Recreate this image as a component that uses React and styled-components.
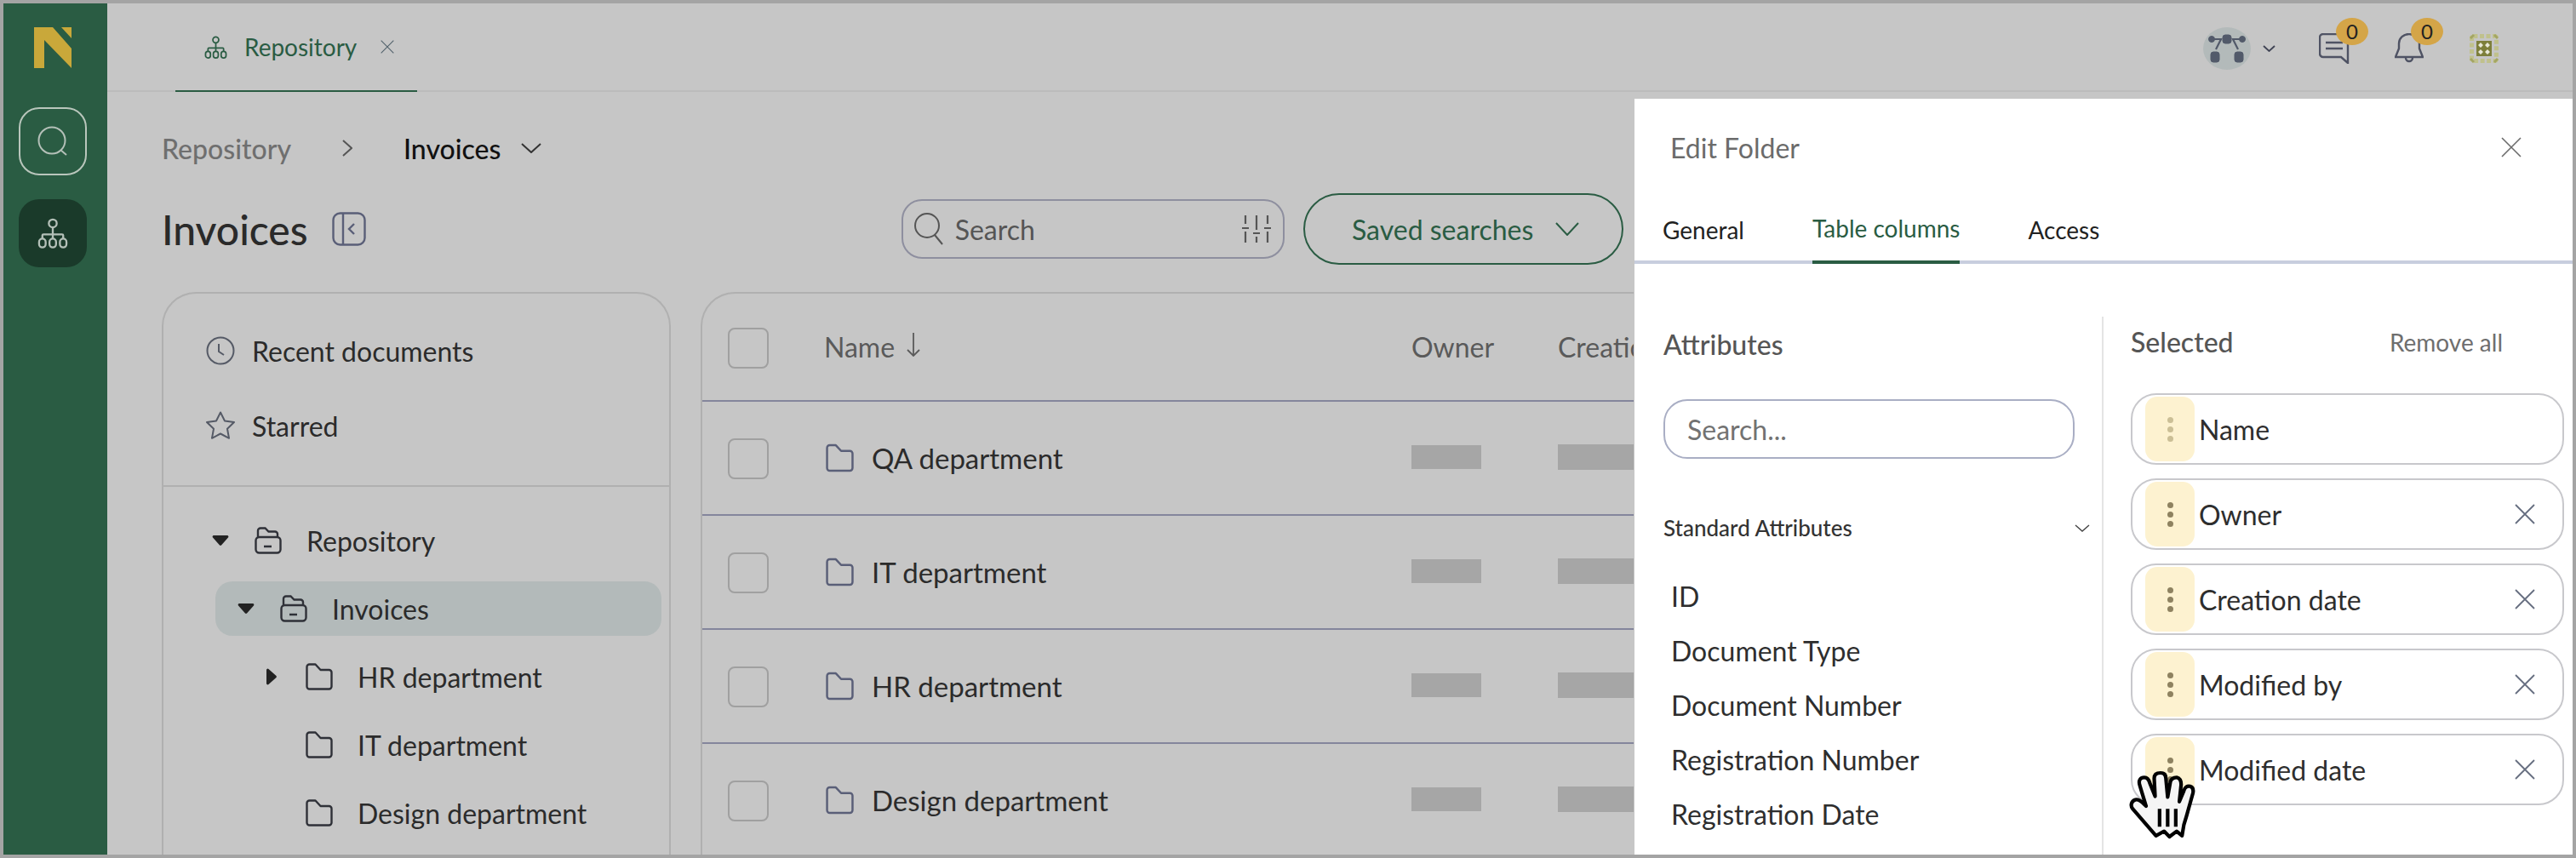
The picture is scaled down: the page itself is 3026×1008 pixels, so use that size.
import React from 'react';
import styled, { createGlobalStyle } from 'styled-components';

const Global = createGlobalStyle`
  html, body { margin: 0; padding: 0; background: #c6c6c6; }
  body { font-family: Lato, "Noto Sans", sans-serif; }
  * { box-sizing: border-box; }
`;

const Frame = styled.div`
  position: relative; width: 3026px; height: 1008px; overflow: hidden;
  border: 4px solid #a4a4a4; display: flex; background: #c6c6c6; color: #2b2b2b;
`;
const Rail = styled.nav`
  width: 122px; flex: none; background: #2a5c43; display: flex; flex-direction: column;
  align-items: center; padding: 28px 6px 0 0;
`;
const Logo = styled.svg` width: 44px; height: 48px; margin-bottom: 46px; `;
const RailButton = styled.button`
  width: 80px; height: 80px; border-radius: 24px; padding: 0; display: flex; align-items: center; justify-content: center;
  background: ${p => p.$active ? '#1a3a2a' : 'transparent'};
  border: ${p => p.$active ? 'none' : '2px solid #b9c6bc'};
  margin-bottom: 28px; color: #b4c0b8;
`;
const Main = styled.main` flex: 1; min-width: 0; display: flex; flex-direction: column; `;
const TopBar = styled.header`
  height: 104px; flex: none; border-bottom: 2px solid #bcbcbc; display: flex; justify-content: space-between; align-items: stretch;
`;
const Tab = styled.div`
  margin-left: 80px; width: 284px; height: 104px; border-bottom: 2px solid #2a5c43; display: flex; align-items: center;
  padding: 0 0 0 34px; color: #2a5c43; font-size: 28px; gap: 20px;
`;
const TabClose = styled.span` margin-left: 8px; display: flex; color: #555; `;
const TopIcons = styled.div` display: flex; align-items: center; padding-right: 87px; padding-top: 4px; `;
const Avatar = styled.div`
  width: 56px; height: 50px; border-radius: 50%; background: #b3baba; display: flex; align-items: center; justify-content: center;
`;
const SmallChevron = styled.span` display: flex; color: #3f4354; margin: 0 51px 0 14px; `;
const IconBadge = styled.div` position: relative; display: flex; margin-right: ${p => p.$mr}px; `;
const Badge = styled.span`
  position: absolute; left: ${p => p.$left}px; top: -18px; width: 38px; height: 32px; border-radius: 50%;
  background: #d4a548; color: #222; font-size: 24px; line-height: 32px; text-align: center;
`;
const Content = styled.div` flex: 1; min-height: 0; padding: 0 0 0 64px; display: flex; flex-direction: column; `;
const Crumbs = styled.div` height: 128px; flex: none; display: flex; align-items: center; font-size: 32px; padding-top: 4px; `;
const CrumbLink = styled.span` color: #6f6f6f; font-weight: 500; `;
const CrumbCurrent = styled.span` color: #111; margin-right: 24px; font-weight: 500; `;
const CrumbSep = styled.span` display: flex; color: #555; margin: 0 60px 0 60px; `;
const TitleRow = styled.div` height: 66px; flex: none; display: flex; align-items: center; position: relative; `;
const Title = styled.h1` font-size: 48px; font-weight: 500; margin: 0 28px 0 0; color: #2a2a2a; `;
const SearchPill = styled.div`
  width: 450px; height: 70px; border: 2px solid #8e8f9f; border-radius: 24px; display: flex; align-items: center;
  margin-left: 629px; padding: 0 14px 0 13px; font-size: 32px; color: #555; gap: 14px;
`;
const Grow = styled.span` flex: 1; `;
const SavedButton = styled.div`
  width: 376px; height: 84px; border: 2px solid #2a5c43; border-radius: 42px; margin-left: 22px; color: #2a5c43;
  display: flex; align-items: center; justify-content: center; gap: 26px; font-size: 32px; padding-left: 6px;
`;
const Columns = styled.div` flex: 1; min-height: 0; margin-top: 41px; display: flex; gap: 35px; `;
const NavCard = styled.aside`
  width: 598px; flex: none; border: 2px solid #b0b0b0; border-bottom: none; border-radius: 40px 40px 0 0;
`;
const Quick = styled.div` padding: 24px 0 25px 50px; border-bottom: 2px solid #b0b0b0; `;
const QuickRow = styled.div` height: 88px; display: flex; align-items: center; gap: 20px; font-size: 32px; color: #2b2b2b; padding-bottom: 2px; `;
const Tree = styled.div` padding: 31px 9px 0 50px; display: flex; flex-direction: column; gap: 16px; `;
const TreeRow = styled.div`
  height: 64px; display: flex; align-items: center; font-size: 32px; color: #2b2b2b;
  margin-left: ${p => p.$selected ? 11 : 0}px; padding-left: ${p => p.$indent}px; border-radius: 20px;
  background: ${p => p.$selected ? '#b3baba' : 'transparent'};
`;
const CaretSlot = styled.span` width: 20px; height: 20px; display: flex; align-items: center; justify-content: center; margin-right: 30px; flex: none; `;
const TreeLabel = styled.span` margin-left: 29px; `;
const TableCard = styled.section`
  width: 1096px; flex: none; overflow: hidden; border: 2px solid #b0b0b0; border-right: none; border-bottom: none; border-radius: 40px 0 0 0;
`;
const HeadRow = styled.div`
  height: 127px; display: grid; grid-template-columns: 143px 690px 172px minmax(0, 1fr); align-items: center; border-bottom: 2px solid #84869c;
  font-size: 32px; color: #5a5a5a;
`;
const BodyRow = styled.div`
  height: 134px; display: grid; grid-template-columns: 143px 690px 172px minmax(0, 1fr); align-items: center; border-bottom: 2px solid #84869c;
  font-size: 33px; color: #2b2b2b;
`;
const ClippedHead = styled.span` display: block; white-space: nowrap; overflow: hidden; `;
const Check = styled.span` display: block; width: 48px; height: 48px; border: 2px solid #a0a0a0; border-radius: 8px; margin: 2px 0 0 30px; `;
const Sortable = styled.span` display: flex; align-items: center; gap: 14px; `;
const SortArrow = styled.svg` width: 16px; height: 28px; margin-bottom: 6px; `;
const NameCell = styled.span` display: flex; align-items: center; gap: 21px; margin-left: 2px; `;
const Placeholder = styled.span` display: block; height: ${p => p.$h}px; background: #a6a6a6; width: ${p => p.$w}px; margin-bottom: 2px; `;
const Panel = styled.aside`
  position: absolute; left: 1916px; top: 112px; right: 0; bottom: 0; background: #fff; display: flex; flex-direction: column;
`;
const PanelHead = styled.div`
  height: 114px; flex: none; display: flex; align-items: center; justify-content: space-between; padding: 0 60px 0 42px;
  font-size: 32px; color: #6b6b6b;
`;
const PanelTabs = styled.div` height: 80px; flex: none; border-bottom: 4px solid #c8cede; display: flex; padding-left: 33px; gap: 80px; font-size: 28px; color: #222; `;
const PanelTab = styled.span`
  height: 80px; display: flex; align-items: center;
  ${p => p.$active ? 'color: #2a5c43; border-bottom: 4px solid #2a5c43;' : ''}
`;
const PanelBody = styled.div` flex: 1; min-height: 0; display: flex; padding-top: 62px; `;
const AttrCol = styled.div` width: 551px; flex: none; border-right: 2px solid #e4e4e4; padding: 0 14px 0 34px; `;
const ColTitle = styled.div` font-size: 32px; font-weight: 500; color: #555; line-height: 40px; `;
const AttrTitle = styled(ColTitle)` margin-top: 13px; `;
const AttrSearch = styled.div`
  width: 483px; height: 70px; margin-top: 44px; border: 2px solid #a9aec4; border-radius: 28px; padding-left: 26px;
  display: flex; align-items: center; font-size: 32px; color: #727272;
`;
const Group = styled.div` margin-top: 64px; height: 34px; display: flex; align-items: center; justify-content: space-between; font-size: 26px; font-weight: 500; color: #333; `;
const AttrList = styled.ul` list-style: none; margin: 31px 0 0; padding: 0 0 0 9px; `;
const AttrItem = styled.li` height: 64px; display: flex; align-items: center; font-size: 32px; color: #2e2e2e; `;
const SelCol = styled.div` flex: 1; padding: 0 10px 0 32px; `;
const SelHead = styled.div` display: flex; align-items: center; justify-content: space-between; padding-right: 72px; margin-top: 10px; height: 40px; `;
const RemoveAll = styled.span` font-size: 28px; color: #6e6e6e; `;
const ChipList = styled.div` display: flex; flex-direction: column; gap: 16px; margin-top: 40px; `;
const Chip = styled.div`
  height: 84px; border: 2px solid #c8c8cc; border-radius: 30px; display: flex; align-items: center; font-size: 32px; color: #2e2e2e; padding: 0 32px 0 15px;
`;
const Handle = styled.span`
  width: 58px; height: 76px; background: #fdf2d0; border-radius: 14px; display: flex; flex-direction: column; align-items: center; justify-content: center; gap: 4px; margin-right: 5px; flex: none;
`;
const Dot = styled.i` width: 7px; height: 7px; border-radius: 50%; background: ${p => p.$dim ? '#cbbf96' : '#8e8260'}; display: block; `;
const ChipLabel = styled.span` flex: 1; `;
const HandCursor = styled.svg` position: absolute; left: 2498px; top: 904px; width: 76px; height: 76px; overflow: visible; `;

const OrgIcon = ({ size = 28, color = 'currentColor' }) => (
  <svg width={size} height={size} viewBox="0 0 28 28" fill="none" stroke={color} strokeWidth="1.8">
    <circle cx="14" cy="5" r="3.6" /><path d="M14 9v6M4.5 19v-3a1 1 0 0 1 1-1h17a1 1 0 0 1 1 1v3M14 15v4" />
    <rect x="1.5" y="19" width="6" height="8" rx="3" /><rect x="11" y="19" width="6" height="8" rx="3" /><rect x="20.5" y="19" width="6" height="8" rx="3" />
  </svg>
);
const XIcon = ({ size = 24, color = '#666e80', w = 1.8 }) => (
  <svg width={size} height={size} viewBox="0 0 24 24" fill="none" stroke={color} strokeWidth={w}><path d="M1 1l22 22M23 1L1 23" /></svg>
);
const Chevron = ({ w = 24, h = 12, color = 'currentColor', sw = 2 }) => (
  <svg width={w} height={h} viewBox={`0 0 ${w} ${h}`} fill="none" stroke={color} strokeWidth={sw}><path d={`M1 1L${w / 2} ${h - 1}L${w - 1} 1`} /></svg>
);
const Folder = ({ color = '#2f3138', w = 32, h = 32 }) => (
  <svg width={w} height={h} viewBox="0 0 32 32" fill="none" stroke={color} strokeWidth="2.4">
    <path d="M1.5 4.5a3 3 0 0 1 3-3h7l6 6.5h10a3 3 0 0 1 3 3v16.5a3 3 0 0 1-3 3h-23a3 3 0 0 1-3-3z" strokeLinejoin="round" />
  </svg>
);
const OpenFolder = () => (
  <svg width="32" height="32" viewBox="0 0 32 32" fill="none" stroke="#2f3138" strokeWidth="2.4">
    <rect x="1.5" y="12" width="29" height="18.5" rx="4" /><path d="M11 23h9M4 12V4.5a3 3 0 0 1 3-3h5.5l4 4H24a3 3 0 0 1 3 3V12" />
  </svg>
);
const CaretDown = () => <svg width="20" height="14" viewBox="0 0 20 14"><path d="M2 1h16a1.5 1.5 0 0 1 1 2.5l-8 9a1.5 1.5 0 0 1-2 0l-8-9A1.5 1.5 0 0 1 2 1z" fill="#222" /></svg>;
const CaretRight = () => <svg width="14" height="20" viewBox="0 0 14 20"><path d="M1 2v16a1.5 1.5 0 0 0 2.5 1l9-8a1.5 1.5 0 0 0 0-2l-9-8A1.5 1.5 0 0 0 1 2z" fill="#222" /></svg>;

const depts = ['QA department', 'IT department', 'HR department', 'Design department'];
const chips = ['Name', 'Owner', 'Creation date', 'Modified by', 'Modified date'];
const attrs = ['ID', 'Document Type', 'Document Number', 'Registration Number', 'Registration Date'];

export default function App() {
  return (
    <Frame>
      <Global />
      <Rail>
        <Logo viewBox="0 0 44 48"><path d="M0 0h22l22 25v23L12 15v33H0zM32 0h12v13z" fill="#c9a83a" /></Logo>
        <RailButton>
          <svg width="36" height="36" viewBox="0 0 36 36" fill="none" stroke="currentColor" strokeWidth="2"><circle cx="17" cy="17" r="15.5" /><path d="M27 28l7 6" /></svg>
        </RailButton>
        <RailButton $active><OrgIcon size={36} /></RailButton>
      </Rail>
      <Main>
        <TopBar>
          <Tab><OrgIcon size={27} /><span>Repository</span><TabClose><XIcon size={16} color="#50606a" w={1.6} /></TabClose></Tab>
          <TopIcons>
            <Avatar>
              <svg width="44" height="34" viewBox="0 0 44 34" fill="#525a6a" stroke="#525a6a">
                <circle cx="4" cy="6" r="3.5" /><circle cx="40" cy="6" r="3.5" /><rect x="17" y="1" width="10" height="10" rx="3" />
                <rect x="3" y="21" width="10" height="12" rx="3" /><rect x="31" y="21" width="10" height="12" rx="3" />
                <path d="M7 6h8l-6 12M37 6h-8l6 12" fill="none" strokeWidth="2.2" />
              </svg>
            </Avatar>
            <SmallChevron><Chevron w={15} h={8} sw={1.8} /></SmallChevron>
            <IconBadge $mr={53}>
              <svg width="36" height="36" viewBox="0 0 36 36" fill="none" stroke="#4f5364" strokeWidth="2.4">
                <path d="M34 35l-8-7H5a4 4 0 0 1-4-4V5a4 4 0 0 1 4-4h26a3 3 0 0 1 3 3z" /><path d="M8 11h20M8 18h20" />
              </svg>
              <Badge $left={20}>0</Badge>
            </IconBadge>
            <IconBadge $mr={54}>
              <svg width="34" height="36" viewBox="0 0 34 36" fill="none" stroke="#4f5364" strokeWidth="2.4">
                <path d="M1 28h32l-4-10V12a12 11 0 0 0-24 0v6zM13 29a4 4 0 1 0 8 0" />
              </svg>
              <Badge $left={19}>0</Badge>
            </IconBadge>
            <svg width="34" height="34" viewBox="0 0 34 34">
              <rect x="2.5" y="2.5" width="29" height="29" rx="2" fill="none" stroke="#c0c18c" strokeWidth="5" strokeDasharray="5 2.5" />
              <path d="M1 5l4-4M29 1l4 4M1 29l4 4M29 33l4-4" stroke="#a4a662" strokeWidth="3" />
              <rect x="8" y="8" width="18" height="18" fill="#7d7f3a" />
              <path d="M13 10l3 3-3 3-3-3zM21 10l3 3-3 3-3-3zM13 18l3 3-3 3-3-3zM21 18l3 3-3 3-3-3z" fill="#e8e8d8" />
            </svg>
          </TopIcons>
        </TopBar>
        <Content>
          <Crumbs>
            <CrumbLink>Repository</CrumbLink>
            <CrumbSep><svg width="12" height="20" viewBox="0 0 12 20" fill="none" stroke="currentColor" strokeWidth="2"><path d="M1 1l10 9-10 9" /></svg></CrumbSep>
            <CrumbCurrent>Invoices</CrumbCurrent>
            <Chevron w={24} h={12} color="#333" />
          </Crumbs>
          <TitleRow>
            <Title>Invoices</Title>
            <svg width="40" height="40" viewBox="0 0 40 40" fill="none" stroke="#5a5f78" strokeWidth="2.4">
              <rect x="1.5" y="1.5" width="37" height="37" rx="8" /><path d="M13 1.5v37M26 14l-6 6 6 6" />
            </svg>
            <SearchPill>
              <svg width="34" height="38" viewBox="0 0 34 38" fill="none" stroke="#555" strokeWidth="2"><ellipse cx="15" cy="15" rx="14" ry="14" /><path d="M24 26l9 11" /></svg>
              <span>Search</span><Grow />
              <svg width="34" height="34" viewBox="0 0 34 34" fill="none" stroke="#555" strokeWidth="2.2"><path d="M4 1v10M4 20v13M17 1v17M17 26v7M30 1v10M30 20v13M0 16h8M13 22h8M26 16h8" /></svg>
            </SearchPill>
            <SavedButton><span>Saved searches</span><Chevron w={28} h={16} /></SavedButton>
          </TitleRow>
          <Columns>
            <NavCard>
              <Quick>
                <QuickRow>
                  <svg width="34" height="34" viewBox="0 0 34 34" fill="none" stroke="#555a66" strokeWidth="2"><circle cx="17" cy="17" r="15.5" /><path d="M15 9v9l6 4" /></svg>
                  <span>Recent documents</span>
                </QuickRow>
                <QuickRow>
                  <svg width="34" height="34" viewBox="0 0 34 34" fill="none" stroke="#555a66" strokeWidth="2"><path d="M17 1.5l5 10 11 1.5-8 7.8 2 11-10-5.3-10 5.3 2-11-8-7.8 11-1.5z" strokeLinejoin="round" /></svg>
                  <span>Starred</span>
                </QuickRow>
              </Quick>
              <Tree>
                <TreeRow $indent={7}><CaretSlot><CaretDown /></CaretSlot><OpenFolder /><TreeLabel>Repository</TreeLabel></TreeRow>
                <TreeRow $indent={26} $selected><CaretSlot><CaretDown /></CaretSlot><OpenFolder /><TreeLabel>Invoices</TreeLabel></TreeRow>
                <TreeRow $indent={67}><CaretSlot><CaretRight /></CaretSlot><Folder /><TreeLabel>HR department</TreeLabel></TreeRow>
                <TreeRow $indent={67}><CaretSlot /><Folder /><TreeLabel>IT department</TreeLabel></TreeRow>
                <TreeRow $indent={67}><CaretSlot /><Folder /><TreeLabel>Design department</TreeLabel></TreeRow>
              </Tree>
            </NavCard>
            <TableCard>
              <HeadRow>
                <Check />
                <Sortable><span>Name</span>
                  <SortArrow viewBox="0 0 16 28" fill="none" stroke="#5a5a5a" strokeWidth="1.8"><path d="M8 0v27M1 20l7 7 7-7" /></SortArrow>
                </Sortable>
                <span>Owner</span><ClippedHead>Creation</ClippedHead>
              </HeadRow>
              {depts.map(d => (
                <BodyRow key={d}>
                  <Check />
                  <NameCell><Folder color="#5a5f78" w={33} h={34} /><span>{d}</span></NameCell>
                  <Placeholder $w={82} $h={28} /><Placeholder $w={120} $h={30} />
                </BodyRow>
              ))}
            </TableCard>
          </Columns>
        </Content>
      </Main>
      <Panel>
        <PanelHead><span>Edit Folder</span><XIcon color="#6b6b6b" w={1.6} /></PanelHead>
        <PanelTabs>
          <PanelTab>General</PanelTab>
          <PanelTab $active>Table columns</PanelTab>
          <PanelTab>Access</PanelTab>
        </PanelTabs>
        <PanelBody>
          <AttrCol>
            <AttrTitle>Attributes</AttrTitle>
            <AttrSearch>Search...</AttrSearch>
            <Group><span>Standard Attributes</span><Chevron w={18} h={9} sw={1.4} color="#444" /></Group>
            <AttrList>{attrs.map(a => <AttrItem key={a}>{a}</AttrItem>)}</AttrList>
          </AttrCol>
          <SelCol>
            <SelHead><ColTitle>Selected</ColTitle><RemoveAll>Remove all</RemoveAll></SelHead>
            <ChipList>
              {chips.map((c, i) => (
                <Chip key={c}>
                  <Handle><Dot $dim={i === 0} /><Dot $dim={i === 0} /><Dot $dim={i === 0} /></Handle>
                  <ChipLabel>{c}</ChipLabel>
                  {i > 0 && <XIcon color="#666e80" />}
                </Chip>
              ))}
            </ChipList>
          </SelCol>
        </PanelBody>
      </Panel>
      <HandCursor viewBox="0 0 72 72" fill="#f5f5f5" stroke="#000" strokeWidth="4" strokeLinejoin="round">
        <path d="M29 70L3 40C0 36 2 31 6 30C10 29 13 32 16 35L18 37L11 14C9 8 12 5 16 5C19 5 21 7 22 11L28 26L27 6C27 1 31 0 34 0C38 0 40 2 40 6L42 27L45 10C46 6 49 5 52 5C56 6 57 9 57 13L55 32L60 20C61 16 64 14 67 15C70 16 71 19 70 23L63 48L60 58L58 70L52 65L44 71L38 65Z" />
        <path d="M33 40v20M42 40v20M51 40v20" fill="none" />
      </HandCursor>
    </Frame>
  );
}
